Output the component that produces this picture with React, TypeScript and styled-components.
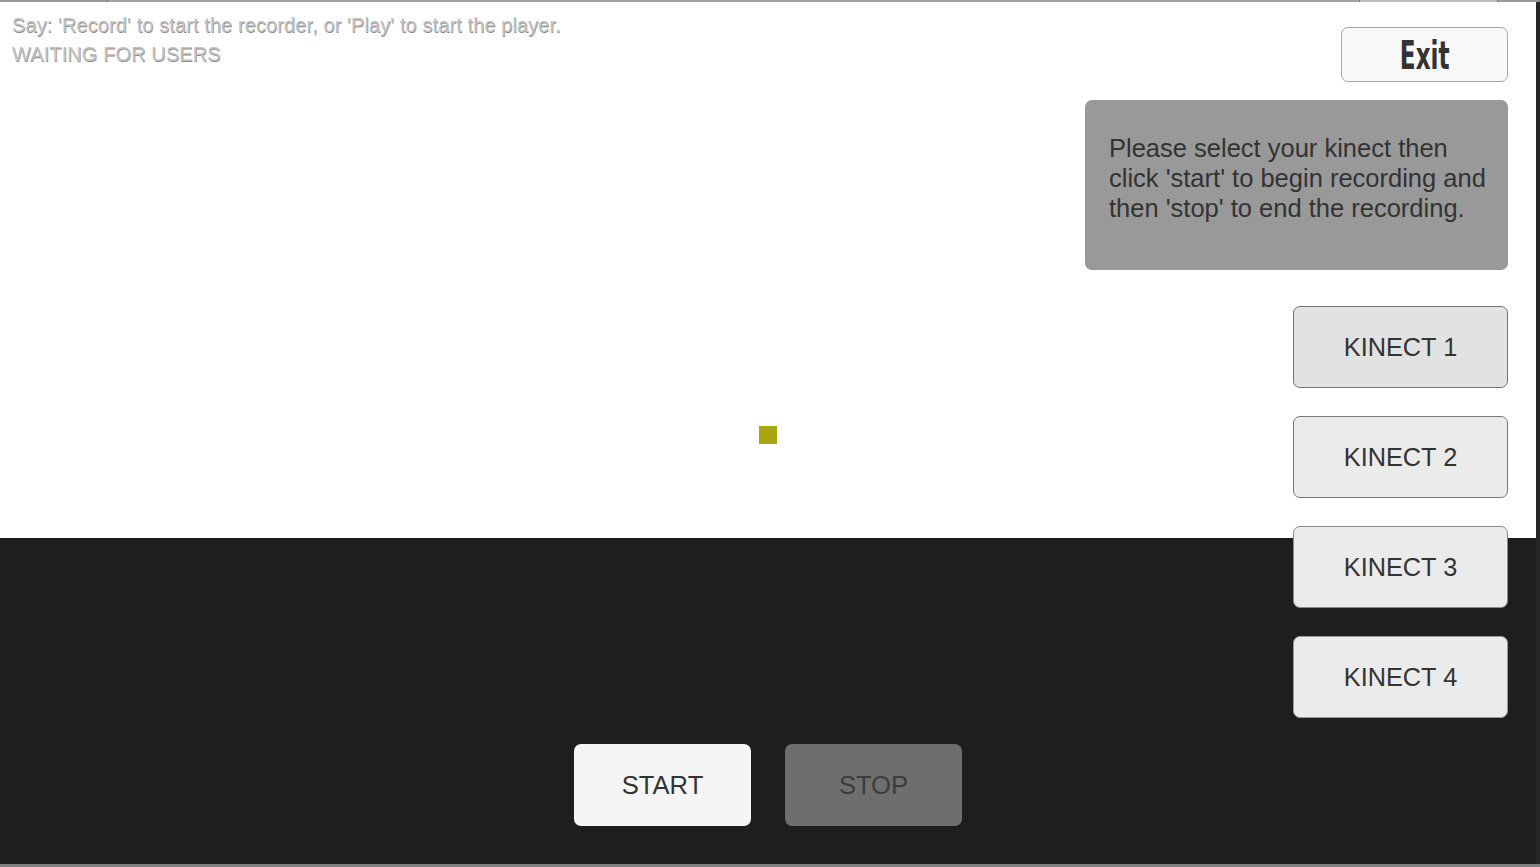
import React from "react";
import styled, { createGlobalStyle } from "styled-components";

const Global = createGlobalStyle`
  html, body { margin: 0; padding: 0; background: #1e1e1e; }
  * { box-sizing: border-box; }
`;

const Screen = styled.div`
  width: 1540px;
  height: 867px;
  display: flex;
  flex-direction: column;
  overflow: hidden;
  font-family: "Liberation Sans", Arial, sans-serif;
`;

const TopStrip = styled.div`
  height: 2px;
  display: flex;
  background: #9c9c9c;
`;

const StripSeg = styled.div<{ $w?: number; $c: string }>`
  ${(p) => (p.$w ? `width: ${p.$w}px;` : "flex: 1;")}
  background: ${(p) => p.$c};
  border-right: 1px solid #7a7a7a;
`;

const Main = styled.div`
  flex: 1;
  display: flex;
`;

const Stage = styled.div`
  position: relative;
  flex: 1;
  display: flex;
  flex-direction: column;
  background: linear-gradient(to bottom, #ffffff 0, #ffffff 536px, #1e1e1e 536px);
`;

const RightEdge = styled.div`
  width: 4px;
  background: #262626;
`;

const BottomStrip = styled.div`
  height: 3px;
  background: #808080;
`;

const TopArea = styled.div`
  display: flex;
  justify-content: space-between;
  align-items: flex-start;
`;

const Labels = styled.div`
  padding: 9px 0 0 12px;
  display: flex;
  flex-direction: column;
`;

const Label = styled.div`
  font-size: 20px;
  letter-spacing: 0.1px;
  line-height: 29px;
  color: #c2c2c2;
  text-shadow: 0.5px 0.5px 0 #8c8c8c;
  white-space: nowrap;
`;

const RightColumn = styled.div`
  padding: 25px 28px 0 0;
  display: flex;
  flex-direction: column;
  align-items: flex-end;
`;

const ExitButton = styled.button`
  width: 167px;
  height: 55px;
  background: #f8f8f8;
  border: 1px solid #a8a8a8;
  border-radius: 7px;
  display: flex;
  align-items: center;
  justify-content: center;
  padding: 2px 0 0;
  cursor: pointer;
`;

const ExitText = styled.span`
  display: inline-block;
  font-family: "Liberation Sans Narrow", "DejaVu Sans Condensed", "Liberation Sans", sans-serif;
  font-weight: bold;
  font-size: 39px;
  line-height: 1;
  color: #333333;
  transform: scaleX(0.66);
`;

const InfoPanel = styled.div`
  margin-top: 18px;
  width: 423px;
  height: 170px;
  background: #999999;
  border-radius: 7px;
  padding: 33px 0 0 24px;
  font-size: 25.5px;
  line-height: 30px;
  color: #333333;
`;

const KinectList = styled.div`
  margin-top: 36px;
  display: flex;
  flex-direction: column;
  gap: 28px;
`;

const KinectButton = styled.button<{ $selected?: boolean; $border: string }>`
  width: 215px;
  height: 82px;
  background: ${(p) => (p.$selected ? "#e2e2e2" : "#ebebeb")};
  border: 1px solid ${(p) => p.$border};
  border-radius: 7px;
  font-family: "Liberation Sans", Arial, sans-serif;
  font-size: 25.3px;
  color: #333333;
  padding: 0;
  cursor: pointer;
`;

const Controls = styled.div`
  margin-top: 26px;
  display: flex;
  justify-content: center;
  gap: 34px;
`;

const ControlButton = styled.button<{ $disabled?: boolean }>`
  width: 177px;
  height: 82px;
  border: none;
  border-radius: 7px;
  background: ${(p) => (p.$disabled ? "#6e6e6e" : "#f5f5f5")};
  color: ${(p) => (p.$disabled ? "#3c3c3c" : "#333333")};
  font-family: "Liberation Sans", Arial, sans-serif;
  font-size: 25.6px;
  padding: 0;
  cursor: pointer;
`;

const Marker = styled.div`
  position: absolute;
  left: 759px;
  top: 424px;
  width: 18px;
  height: 18px;
  background: #aaa610;
`;

const kinects = [
  { name: "KINECT 1", selected: true, border: "#727272" },
  { name: "KINECT 2", selected: false, border: "#777777" },
  { name: "KINECT 3", selected: false, border: "#8a8a8a" },
  { name: "KINECT 4", selected: false, border: "#9a9a9a" },
];

export default function App() {
  return (
    <>
      <Global />
      <Screen>
        <TopStrip>
          <StripSeg $w={108} $c="#9a9a9a" />
          <StripSeg $c="#a2a2a2" />
          <StripSeg $w={138} $c="#bdbdbd" />
          <StripSeg $w={42} $c="#9a9a9a" />
        </TopStrip>
        <Main>
          <Stage>
            <TopArea>
              <Labels>
                <Label>Say: 'Record' to start the recorder, or 'Play' to start the player.</Label>
                <Label>WAITING FOR USERS</Label>
              </Labels>
              <RightColumn>
                <ExitButton>
                  <ExitText>Exit</ExitText>
                </ExitButton>
                <InfoPanel>
                  Please select your kinect then
                  <br />
                  click 'start' to begin recording and
                  <br />
                  then 'stop' to end the recording.
                </InfoPanel>
                <KinectList>
                  {kinects.map((k) => (
                    <KinectButton key={k.name} $selected={k.selected} $border={k.border}>
                      {k.name}
                    </KinectButton>
                  ))}
                </KinectList>
              </RightColumn>
            </TopArea>
            <Controls>
              <ControlButton>START</ControlButton>
              <ControlButton $disabled>STOP</ControlButton>
            </Controls>
            <Marker />
          </Stage>
          <RightEdge />
        </Main>
        <BottomStrip />
      </Screen>
    </>
  );
}
